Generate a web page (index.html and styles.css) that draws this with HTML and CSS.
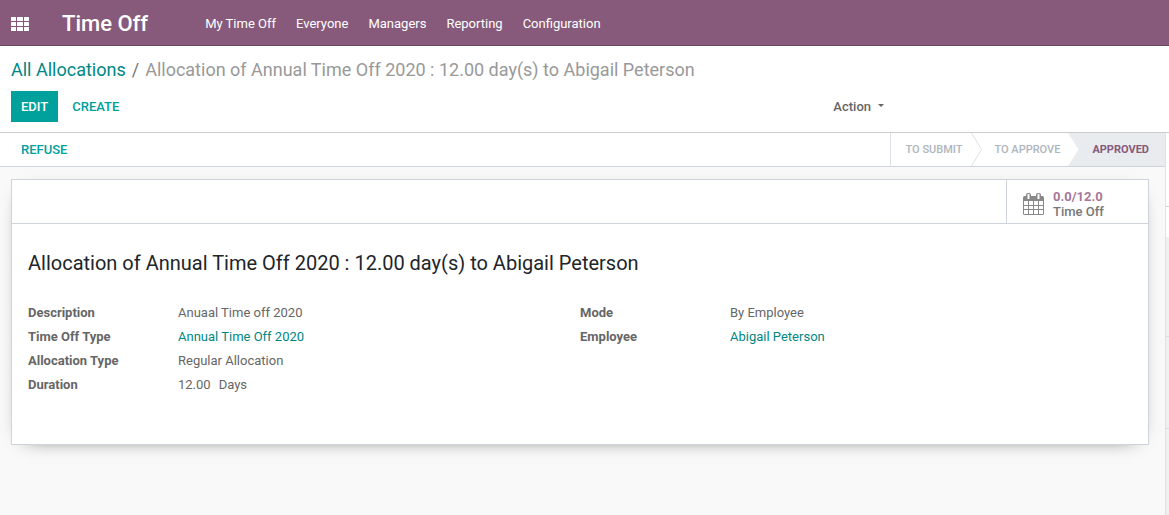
FILE: index.html
```html
<!DOCTYPE html>
<html lang="en">
<head>
<meta charset="utf-8">
<meta name="viewport" content="width=device-width, initial-scale=1">
<title>Time Off</title>
<link rel="stylesheet" href="styles.css">
</head>
<body>
<header class="navbar">
  <button class="apps" type="button" aria-label="Applications">
    <svg width="18" height="14" viewBox="0 0 18 14" fill="currentColor" aria-hidden="true">
      <rect x="0" y="0" width="5" height="4" rx="0.500"/><rect x="6" y="0" width="6" height="4" rx="0.500"/><rect x="13" y="0" width="5" height="4" rx="0.500"/>
      <rect x="0" y="5" width="5" height="4" rx="0.500"/><rect x="6" y="5" width="6" height="4" rx="0.500"/><rect x="13" y="5" width="5" height="4" rx="0.500"/>
      <rect x="0" y="10" width="5" height="4" rx="0.500"/><rect x="6" y="10" width="6" height="4" rx="0.500"/><rect x="13" y="10" width="5" height="4" rx="0.500"/>
    </svg>
  </button>
  <a class="brand" href="#">Time Off</a>
  <nav class="menu">
    <a href="#">My Time Off</a>
    <a href="#">Everyone</a>
    <a href="#">Managers</a>
    <a href="#">Reporting</a>
    <a href="#">Configuration</a>
  </nav>
</header>

<section class="control-panel">
  <nav class="breadcrumb" aria-label="Breadcrumb">
    <a href="#">All Allocations</a>
    <span class="slash">/</span>
    <span class="current">Allocation of Annual Time Off 2020 : 12.00 day(s) to Abigail Peterson</span>
  </nav>
  <div class="toolbar">
    <div class="main-actions">
      <button class="btn btn-primary" type="button">EDIT</button>
      <button class="btn btn-flat" type="button">CREATE</button>
    </div>
    <div class="side-actions">
      <button class="action" type="button">Action
        <svg width="6" height="5" viewBox="0 0 6 5" fill="currentColor" aria-hidden="true"><path d="M0 0h6L3 3z"/></svg>
      </button>
    </div>
  </div>
</section>

<div class="content">
  <main class="form-view">
    <div class="statusbar">
      <button class="btn btn-flat refuse" type="button">REFUSE</button>
      <div class="stages">
        <button class="stage stage-first" type="button">TO SUBMIT</button>
        <svg class="chevron" width="12" height="33" viewBox="0 0 12 33" aria-hidden="true"><path d="M0.500 0L10.500 16.500L0.500 33" fill="none" stroke="#dee2e6"/></svg>
        <button class="stage stage-middle" type="button">TO APPROVE</button>
        <svg class="chevron chevron-active" width="12" height="33" viewBox="0 0 12 33" aria-hidden="true"><path d="M0 0L10.500 16.500L0 33" fill="#fff"/></svg>
        <button class="stage stage-active" type="button" aria-current="step">APPROVED</button>
      </div>
    </div>
    <div class="sheet-area">
      <article class="sheet">
        <div class="stat-row">
          <button class="stat" type="button">
            <svg width="21" height="22" viewBox="0 0 21 22" aria-hidden="true">
              <path d="M1.500 3H19.500Q21 3 21 4.500V20.500Q21 22 19.500 22H1.500Q0 22 0 20.500V4.500Q0 3 1.500 3Z" fill="#888"/>
              <path d="M1 8H5V12H1ZM6 8H10V12H6ZM11 8H15V12H11ZM16 8H20V12H16ZM1 13H5V16H1ZM6 13H10V16H6ZM11 13H15V16H11ZM16 13H20V16H16ZM1 17H5V21H1ZM6 17H10V21H6ZM11 17H15V21H11ZM16 17H20V21H16Z" fill="#fff"/>
              <rect x="3" y="0" width="5" height="7" rx="2" fill="#888"/><rect x="13" y="0" width="5" height="7" rx="2" fill="#888"/>
              <rect x="4.500" y="1" width="2" height="5" rx="0.500" fill="#fff"/><rect x="14.500" y="1" width="2" height="5" rx="0.500" fill="#fff"/>
            </svg>
            <span class="stat-text"><span class="stat-value">0.0/12.0</span><span>Time Off</span></span>
          </button>
        </div>
        <div class="sheet-body">
          <h1 class="title">Allocation of Annual Time Off 2020 : 12.00 day(s) to Abigail Peterson</h1>
          <div class="groups">
            <dl class="fields">
              <dt>Description</dt><dd>Anuaal Time off 2020</dd>
              <dt>Time Off Type</dt><dd><a href="#">Annual Time Off 2020</a></dd>
              <dt>Allocation Type</dt><dd>Regular Allocation</dd>
              <dt>Duration</dt><dd class="duration"><span>12.00</span><span>Days</span></dd>
            </dl>
            <dl class="fields">
              <dt>Mode</dt><dd>By Employee</dd>
              <dt>Employee</dt><dd><a href="#">Abigail Peterson</a></dd>
            </dl>
          </div>
        </div>
      </article>
    </div>
  </main>
  <aside class="chatter" aria-label="Messages">
    <div class="chatter-top"></div>
    <div class="chatter-compose"></div>
    <div class="chatter-message"></div>
    <div class="chatter-message"></div>
  </aside>
</div>
</body>
</html>
```
FILE: styles.css
```css
* {
  box-sizing: border-box;
}

body {
  margin: 0;
  min-height: 100vh;
  display: flex;
  flex-direction: column;
  background: #fff;
  color: #666;
  font: 13px/20px Roboto, "Liberation Sans", sans-serif;
}

a {
  color: #008784;
  text-decoration: none;
}

button {
  margin: 0;
  border: 0;
  background: none;
  font: inherit;
  color: inherit;
  cursor: pointer;
}

svg {
  display: block;
  flex: none;
}

.navbar {
  display: flex;
  align-items: center;
  height: 46px;
  padding: 2px 0 0 11px;
  background: #875a7b;
  border-bottom: 1px solid #68465f;
  color: #fff;
}

.apps {
  padding: 0;
}

.brand {
  margin-left: 33px;
  color: #fff;
  font-size: 22px;
  font-weight: 500;
  line-height: 42px;
}

.menu {
  display: flex;
  gap: 20px;
  margin-left: 57px;
}

.menu a {
  color: #fff;
}

.control-panel {
  padding: 12px 11px 10px;
  border-bottom: 1px solid #ccc;
}

.breadcrumb {
  display: flex;
  gap: 6px;
  font-size: 18px;
  line-height: 24px;
}

.slash {
  color: #777;
}

.current {
  color: #999;
}

.toolbar {
  display: grid;
  grid-template-columns: 71% 1fr;
  margin-top: 9px;
}

.main-actions {
  display: flex;
  gap: 4px;
}

.btn {
  padding: 5px 10px;
  font-weight: 500;
  line-height: 21px;
}

.btn-primary {
  background: #00a09d;
  color: #fff;
}

.btn-flat {
  color: #00a09d;
}

.action {
  display: flex;
  align-items: center;
  gap: 7px;
  height: 31px;
  padding: 0 8px;
  font-weight: 500;
}

.content {
  flex: 1;
  display: flex;
}

.form-view {
  flex: 1;
  display: flex;
  flex-direction: column;
}

.statusbar {
  display: flex;
  justify-content: space-between;
  align-items: center;
  height: 34px;
  padding-left: 11px;
  border-bottom: 1px solid #ced4da;
}

.stages {
  display: flex;
  align-self: stretch;
  border-left: 1px solid #dee2e6;
}

.stage {
  padding: 0 9px 0 12px;
  color: #adb5bd;
  font-size: 11px;
  font-weight: 500;
}

.stage-first {
  padding-left: 15px;
}

.stage-middle {
  padding: 0 8px 0 11px;
}

.stage-active {
  padding-right: 16px;
  background: #e9ecef;
  color: #875a7b;
  font-weight: 700;
}

.chevron-active {
  background: #e9ecef;
}

.sheet-area {
  flex: 1;
  padding: 12px 16px 24px 11px;
  background: #f9f9f9;
}

.sheet {
  background: #fff;
  border: 1px solid #ced4da;
  box-shadow: 0 5px 20px -15px #000;
}

.stat-row {
  display: flex;
  justify-content: flex-end;
  height: 44px;
  border-bottom: 1px solid #ced4da;
}

.stat {
  display: flex;
  align-items: center;
  gap: 9px;
  width: 142px;
  padding: 4px 16px 0;
  border-left: 1px solid #ced4da;
  color: #777;
  font-weight: 500;
  line-height: 15px;
  text-align: left;
}

.stat-text {
  display: flex;
  flex-direction: column;
}

.stat-value {
  color: #a5779a;
  font-weight: 700;
}

.sheet-body {
  padding: 24px 16px 49px;
}

.title {
  margin: 0;
  color: #212529;
  font-size: 20px;
  font-weight: 400;
  line-height: 30px;
}

.groups {
  display: grid;
  grid-template-columns: 1fr 1fr;
  margin-top: 25px;
}

.fields {
  display: grid;
  grid-template-columns: 150px 1fr;
  align-content: start;
  row-gap: 4px;
  margin: 0;
}

.fields dt {
  font-weight: 700;
}

.fields dd {
  margin: 0;
}

.duration {
  display: flex;
  gap: 8px;
}

.chatter {
  display: flex;
  flex-direction: column;
  width: 4px;
  border-left: 1px solid #dee2e6;
  background: #eff0f2;
}

.chatter-top {
  height: 74px;
  background: #fff;
  border-bottom: 1px solid #ced4da;
}

.chatter-compose {
  height: 30px;
  background: #fff;
}

.chatter-message {
  height: 100px;
  border-bottom: 1px solid #d8dce0;
}

.chatter-message + .chatter-message {
  height: 92px;
}
```
